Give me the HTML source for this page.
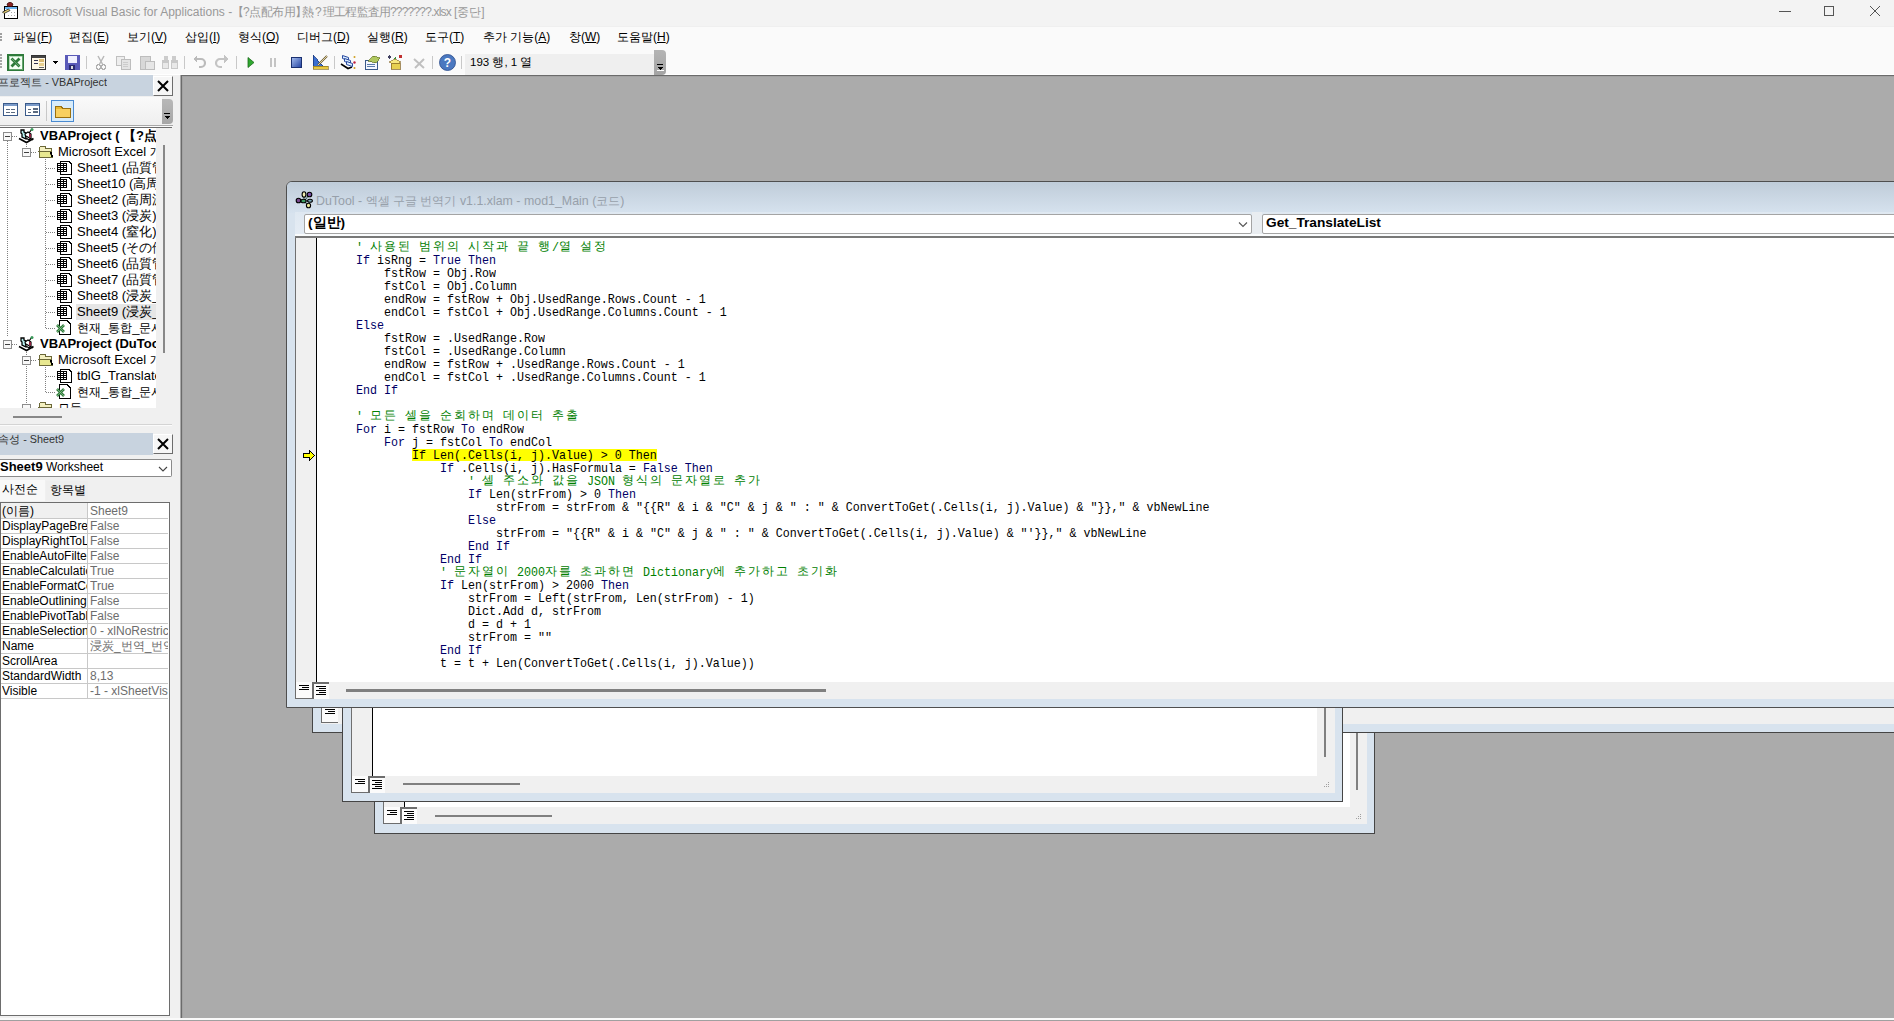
<!DOCTYPE html><html><head><meta charset="utf-8"><style>
*{margin:0;padding:0;box-sizing:border-box}
html,body{width:1894px;height:1021px;overflow:hidden;background:#ababab;position:relative;font-family:"Liberation Sans",sans-serif}
body>div{position:absolute}
div div{position:absolute}
.t{white-space:pre;line-height:1}
i.w{display:inline-block;width:14px;font-style:normal;text-align:left}
.cl{position:absolute;font-family:"Liberation Mono",monospace;font-size:11.67px;white-space:pre;line-height:13px;height:13px;color:#000;transform:scaleY(1.15);transform-origin:0 9px}
.cl i.w{transform:translateY(-1px) scaleY(0.8696);transform-origin:50% 9px}
.k{color:#000066}
.c{color:#008000}
.u{text-decoration:underline}
</style></head><body><div style="left:0px;top:0px;width:1894px;height:26px;background:#f3f3f3"></div>
<svg style="position:absolute;left:0px;top:0px" width="22" height="22" viewBox="0 0 22 22" shape-rendering="crispEdges"><rect x="4.5" y="6.5" width="13" height="12" fill="#fff" stroke="#000"/><rect x="5" y="7" width="12" height="2" fill="#6ab4f0"/><g fill="#aaa"><rect x="11" y="12" width="1" height="1"/><rect x="14" y="12" width="1" height="1"/><rect x="8" y="15" width="1" height="1"/><rect x="11" y="15" width="1" height="1"/><rect x="14" y="15" width="1" height="1"/></g><g shape-rendering="geometricPrecision"><path d="M7 4 L9 2.5 L11 2.5 L13 4 L12 6.5 L8 6.5 Z" fill="#8a2020" stroke="#3a0a0a" stroke-width="0.8"/><path d="M2.5 12 L8.5 9 L10 10.5 L4 13.5 Z" fill="#e8d070" stroke="#222" stroke-width="0.8"/></g></svg>
<div class="t" style="left:23px;top:6px;font-size:12px;color:#999">Microsoft Visual Basic for Applications -</div>
<div class="t" style="left:232px;top:6px;font-size:12px;color:#999">【</div>
<div class="t" style="left:243px;top:6px;font-size:12px;color:#999;letter-spacing:-0.8px">?</div>
<div class="t" style="left:249px;top:6px;font-size:12px;color:#999;letter-spacing:-0.5px">点配布用</div>
<div class="t" style="left:295px;top:6px;font-size:12px;color:#999">】</div>
<div class="t" style="left:302px;top:6px;font-size:12px;color:#999">熱</div>
<div class="t" style="left:315px;top:6px;font-size:12px;color:#999">?</div>
<div class="t" style="left:323px;top:6px;font-size:12px;color:#999;letter-spacing:-0.8px">理工程監査用</div>
<div class="t" style="left:390px;top:6px;font-size:12px;color:#999;letter-spacing:-0.8px">???????</div>
<div class="t" style="left:431px;top:6px;font-size:12px;color:#999;letter-spacing:-0.8px">.xlsx</div>
<div class="t" style="left:454px;top:6px;font-size:12px;color:#999">[중단]</div>
<div style="left:1779px;top:11px;width:12px;height:1px;background:#555"></div>
<div style="left:1824px;top:6px;width:10px;height:10px;border:1px solid #555"></div>
<svg style="position:absolute;left:1869px;top:5px" width="13" height="13" viewBox="0 0 13 13" shape-rendering="crispEdges"><path d="M1 1 L11 11 M11 1 L1 11" stroke="#555" stroke-width="1" fill="none" shape-rendering="geometricPrecision"/></svg>
<div style="left:0px;top:26px;width:1894px;height:49px;background:#fafafa"></div>
<div style="left:0px;top:26px;width:1894px;height:1px;background:#efefef"></div>
<div style="left:0px;top:74px;width:1894px;height:1px;background:#fff"></div>
<div style="left:0px;top:33px;width:2px;height:2px;background:#a0a0a0"></div>
<div style="left:0px;top:36px;width:2px;height:2px;background:#a0a0a0"></div>
<div style="left:0px;top:39px;width:2px;height:2px;background:#a0a0a0"></div>
<div class="t" style="left:13px;top:31px;font-size:12px;color:#000">파일(<span class="u">F</span>)</div>
<div class="t" style="left:69px;top:31px;font-size:12px;color:#000">편집(<span class="u">E</span>)</div>
<div class="t" style="left:127px;top:31px;font-size:12px;color:#000">보기(<span class="u">V</span>)</div>
<div class="t" style="left:185px;top:31px;font-size:12px;color:#000">삽입(<span class="u">I</span>)</div>
<div class="t" style="left:238px;top:31px;font-size:12px;color:#000">형식(<span class="u">O</span>)</div>
<div class="t" style="left:297px;top:31px;font-size:12px;color:#000">디버그(<span class="u">D</span>)</div>
<div class="t" style="left:367px;top:31px;font-size:12px;color:#000">실행(<span class="u">R</span>)</div>
<div class="t" style="left:425px;top:31px;font-size:12px;color:#000">도구(<span class="u">T</span>)</div>
<div class="t" style="left:483px;top:31px;font-size:12px;color:#000">추가 기능(<span class="u">A</span>)</div>
<div class="t" style="left:569px;top:31px;font-size:12px;color:#000">창(<span class="u">W</span>)</div>
<div class="t" style="left:617px;top:31px;font-size:12px;color:#000">도움말(<span class="u">H</span>)</div>
<div style="left:0px;top:54px;width:2px;height:2px;background:#a8a8a8"></div>
<div style="left:0px;top:57px;width:2px;height:2px;background:#a8a8a8"></div>
<div style="left:0px;top:60px;width:2px;height:2px;background:#a8a8a8"></div>
<div style="left:0px;top:63px;width:2px;height:2px;background:#a8a8a8"></div>
<div style="left:0px;top:66px;width:2px;height:2px;background:#a8a8a8"></div>
<div style="left:465px;top:54px;width:190px;height:21px;background:#efefef"></div>
<div style="left:654px;top:50px;width:12px;height:25px;background:linear-gradient(#b4b4b4,#a4a4a4);border-radius:0 4px 4px 0"></div>
<svg style="position:absolute;left:657px;top:64px" width="7" height="8" viewBox="0 0 7 8" shape-rendering="crispEdges"><rect x="0" y="0" width="6" height="1" fill="#000"/><path d="M0 3 L6 3 L3 6 Z" fill="#000"/><rect x="0" y="6" width="7" height="1" fill="#fff"/></svg>
<div style="left:86px;top:56px;width:1px;height:13px;background:#c8c8c8"></div>
<div style="left:184px;top:56px;width:1px;height:13px;background:#c8c8c8"></div>
<div style="left:236px;top:56px;width:1px;height:13px;background:#c8c8c8"></div>
<div style="left:334px;top:56px;width:1px;height:13px;background:#c8c8c8"></div>
<div style="left:432px;top:56px;width:1px;height:13px;background:#c8c8c8"></div>
<div style="left:461px;top:56px;width:1px;height:13px;background:#c8c8c8"></div>
<svg style="position:absolute;left:7px;top:54px" width="17" height="17" viewBox="0 0 17 17" shape-rendering="crispEdges"><rect x="1" y="1" width="15" height="15" fill="#f4fff4" stroke="#2e7a3a" stroke-width="2"/><rect x="2" y="2" width="13" height="13" fill="none" stroke="#8ac090" stroke-width="0.6"/><g shape-rendering="geometricPrecision"><path d="M4.5 4.5 L12.5 12.5 M12.5 4.5 L4.5 12.5" stroke="#2e7a3a" stroke-width="2.8"/><path d="M4.5 4.5 L12.5 12.5" stroke="#7ab884" stroke-width="0.7"/></g></svg>
<svg style="position:absolute;left:31px;top:55px" width="15" height="15" viewBox="0 0 15 15" shape-rendering="crispEdges"><rect x="0.5" y="0.5" width="14" height="14" fill="#fff8e8" stroke="#333"/><rect x="1" y="1" width="13" height="2" fill="#444"/><rect x="3" y="5" width="4" height="1" fill="#335"/><rect x="3" y="8" width="4" height="1" fill="#335"/><rect x="8" y="4" width="5" height="3" fill="#d8b870"/><rect x="8" y="8" width="5" height="3" fill="#e8d090"/><rect x="8" y="12" width="5" height="1" fill="#666"/></svg>
<svg style="position:absolute;left:52px;top:61px" width="6" height="4" viewBox="0 0 6 4" shape-rendering="crispEdges"><path d="M0 0 L6 0 L3 3 Z" fill="#000"/></svg>
<svg style="position:absolute;left:65px;top:55px" width="15" height="15" viewBox="0 0 15 15" shape-rendering="crispEdges"><rect x="0" y="0" width="15" height="15" rx="1" fill="#5a5ab8"/><rect x="3" y="1" width="9" height="7" fill="#f0f0ff"/><rect x="4" y="10" width="6" height="5" fill="#2a2a70"/><rect x="6" y="11" width="2" height="3" fill="#ddd"/></svg>
<svg style="position:absolute;left:95px;top:55px" width="12" height="15" viewBox="0 0 12 15" shape-rendering="crispEdges"><path d="M3 1 L8 10 M9 1 L4 10" stroke="#b8b8b8" stroke-width="1.5" fill="none" shape-rendering="geometricPrecision"/><circle cx="3.5" cy="12" r="2.2" fill="none" stroke="#b0b0b0" stroke-width="1.3"/><circle cx="8.5" cy="12" r="2.2" fill="none" stroke="#b0b0b0" stroke-width="1.3"/></svg>
<svg style="position:absolute;left:115px;top:55px" width="17" height="15" viewBox="0 0 17 15" shape-rendering="crispEdges"><rect x="1" y="1" width="8" height="9" fill="#eee" stroke="#c0c0c0"/><rect x="6" y="4" width="9" height="10" fill="#e4e4e4" stroke="#bdbdbd"/><path d="M8 7 H13 M8 9 H13 M8 11 H13" stroke="#ccc"/></svg>
<svg style="position:absolute;left:139px;top:55px" width="17" height="15" viewBox="0 0 17 15" shape-rendering="crispEdges"><rect x="1" y="1" width="10" height="13" fill="#d8d8d8" stroke="#bdbdbd"/><rect x="6" y="6" width="9" height="8" fill="#e6e6e6" stroke="#bdbdbd"/></svg>
<svg style="position:absolute;left:162px;top:55px" width="16" height="14" viewBox="0 0 16 14" shape-rendering="crispEdges"><rect x="2" y="1" width="4" height="5" fill="#ccc"/><rect x="10" y="1" width="4" height="5" fill="#ccc"/><rect x="0" y="5" width="7" height="9" rx="1" fill="#c8c8c8"/><rect x="9" y="5" width="7" height="9" rx="1" fill="#c8c8c8"/><rect x="1" y="8" width="5" height="5" fill="#e8e8e8"/><rect x="10" y="8" width="5" height="5" fill="#e8e8e8"/></svg>
<svg style="position:absolute;left:193px;top:55px" width="13" height="14" viewBox="0 0 13 14" shape-rendering="crispEdges"><path d="M3 4 H8 A4 4 0 0 1 8 12 H6" stroke="#bbb" stroke-width="2.2" fill="none" shape-rendering="geometricPrecision"/><path d="M0 4 L4 0 L4 8 Z" fill="#bbb"/></svg>
<svg style="position:absolute;left:215px;top:55px" width="13" height="14" viewBox="0 0 13 14" shape-rendering="crispEdges"><path d="M10 4 H5 A4 4 0 0 0 5 12 H7" stroke="#c4c4c4" stroke-width="2.2" fill="none" shape-rendering="geometricPrecision"/><path d="M13 4 L9 0 L9 8 Z" fill="#c4c4c4"/></svg>
<svg style="position:absolute;left:247px;top:57px" width="8" height="11" viewBox="0 0 8 11" shape-rendering="crispEdges"><path d="M1 0.5 L7 5.5 L1 10.5 Z" fill="#2fa82f" stroke="#1a6a1a" stroke-width="0.8" shape-rendering="geometricPrecision"/></svg>
<svg style="position:absolute;left:269px;top:57px" width="9" height="11" viewBox="0 0 9 11" shape-rendering="crispEdges"><rect x="1" y="1" width="2" height="9" fill="#c4c4c4"/><rect x="5" y="1" width="2" height="9" fill="#c4c4c4"/></svg>
<svg style="position:absolute;left:291px;top:57px" width="11" height="11" viewBox="0 0 11 11" shape-rendering="crispEdges"><defs><linearGradient id="gs" x1="0" y1="0" x2="1" y2="1"><stop offset="0" stop-color="#a8c0f0"/><stop offset="1" stop-color="#2040a0"/></linearGradient></defs><rect x="0.5" y="0.5" width="10" height="10" fill="url(#gs)" stroke="#1a3070"/></svg>
<svg style="position:absolute;left:312px;top:54px" width="17" height="16" viewBox="0 0 17 16" shape-rendering="crispEdges"><path d="M1 1 L1 12 L11 12 Z" fill="#3a6fd0" stroke="#1a3a80" stroke-width="0.8"/><rect x="1" y="12" width="15" height="3" fill="#e8c840" stroke="#7a6010" stroke-width="0.6"/><path d="M6 11 L15 2" stroke="#6a5a30" stroke-width="2" shape-rendering="geometricPrecision"/><path d="M6 11 L15 2" stroke="#e0d0a0" stroke-width="1" shape-rendering="geometricPrecision"/></svg>
<svg style="position:absolute;left:340px;top:54px" width="17" height="17" viewBox="0 0 17 17" shape-rendering="crispEdges"><g shape-rendering="geometricPrecision"><path d="M1 10 L8 14.5 L12 13" stroke="#000" stroke-width="1.6" fill="none"/><path d="M2.5 1.5 L8.5 3.5 L8.5 6.5 L2.5 4.5 Z" fill="#d8ecff" stroke="#2a4aa0"/><path d="M4.5 4.5 L10.5 6.5 L10.5 9.5 L4.5 7.5 Z" fill="#d8ecff" stroke="#2a4aa0"/><path d="M6.5 7.5 L12.5 9.5 L12.5 12.5 L6.5 10.5 Z" fill="#d8ecff" stroke="#2a4aa0"/><circle cx="14.5" cy="3" r="1" fill="#d0a020"/><circle cx="14.5" cy="8.5" r="1.2" fill="#c02040"/><circle cx="14.5" cy="14" r="1" fill="#d0a020"/></g></svg>
<svg style="position:absolute;left:364px;top:55px" width="17" height="15" viewBox="0 0 17 15" shape-rendering="crispEdges"><rect x="1" y="5" width="12" height="9" fill="#f4f8ff" stroke="#3a5a8a"/><path d="M3 9 H11 M3 11 H11" stroke="#5a7aaa"/><path d="M4 6 L9 1 L16 3 L12 8 Z" fill="#b0c860" stroke="#607020" stroke-width="0.7"/></svg>
<svg style="position:absolute;left:387px;top:54px" width="17" height="16" viewBox="0 0 17 16" shape-rendering="crispEdges"><circle cx="2.5" cy="3" r="1.8" fill="#404060"/><rect x="12" y="1" width="3" height="3" fill="#c03030"/><path d="M6 5 L9 3 L9 7 Z" fill="#3a8a3a"/><path d="M2 8 L8 5 L14 8 L8 11 Z" fill="#f8e880" stroke="#806020" stroke-width="0.6"/><rect x="4" y="9" width="9" height="6" fill="#e8d050" stroke="#806020" stroke-width="0.7"/></svg>
<svg style="position:absolute;left:412px;top:57px" width="14" height="12" viewBox="0 0 14 12" shape-rendering="crispEdges"><path d="M2 2 L12 11 M12 2 L3 11" stroke="#c0c0c0" stroke-width="2" shape-rendering="geometricPrecision"/></svg>
<svg style="position:absolute;left:439px;top:54px" width="17" height="17" viewBox="0 0 17 17" shape-rendering="crispEdges"><circle cx="8.5" cy="8.5" r="8" fill="#4a78c0" stroke="#2a4a8a" stroke-width="0.8" shape-rendering="geometricPrecision"/><text x="8.5" y="13" font-family="Liberation Sans" font-weight="bold" font-size="12" fill="#fff" text-anchor="middle">?</text></svg>
<div class="t" style="left:470px;top:57px;font-size:11.5px;color:#000">193 행, 1 열</div>
<div style="left:0px;top:75px;width:180px;height:946px;background:#f0f0f0"></div>
<div style="left:0px;top:75px;width:153px;height:21px;background:#c8d3df"></div>
<div style="left:0px;top:75px;width:107px;height:20px;overflow:hidden"><div class="t" style="right:0;top:2px;font-size:10.8px;color:#333">프로젝트 - VBAProject</div></div>
<div style="left:153px;top:76px;width:20px;height:20px;background:#f6f6f6;border-right:1px solid #6d6d6d;border-bottom:1px solid #6d6d6d;border-top:1px solid #fff;border-left:1px solid #fff"></div>
<svg style="position:absolute;left:157px;top:80px" width="12" height="12" viewBox="0 0 12 12" shape-rendering="crispEdges"><path d="M1 1 L11 11 M11 1 L1 11" stroke="#000" stroke-width="2" fill="none" shape-rendering="geometricPrecision"/></svg>
<div style="left:0px;top:97px;width:162px;height:27px;background:linear-gradient(#fafafa,#efefef)"></div>
<div style="left:162px;top:99px;width:11px;height:25px;background:linear-gradient(#b8b8b8,#a6a6a6);border-radius:0 4px 4px 0"></div>
<svg style="position:absolute;left:164px;top:113px" width="7" height="8" viewBox="0 0 7 8" shape-rendering="crispEdges"><rect x="0" y="0" width="6" height="1" fill="#000"/><path d="M0 3 L6 3 L3 6 Z" fill="#000"/></svg>
<svg style="position:absolute;left:3px;top:103px" width="15" height="13" viewBox="0 0 15 13" shape-rendering="crispEdges"><rect x="0.5" y="0.5" width="14" height="12" fill="#fff" stroke="#3a5a8a"/><rect x="1" y="1" width="13" height="2" fill="#7a9ac8"/><path d="M3 6 H7 M3 9 H7 M8 6 H12 M8 9 H12" stroke="#5a6a80"/></svg>
<svg style="position:absolute;left:25px;top:103px" width="15" height="13" viewBox="0 0 15 13" shape-rendering="crispEdges"><rect x="0.5" y="0.5" width="14" height="12" fill="#fff" stroke="#3a5a8a"/><rect x="1" y="1" width="13" height="2" fill="#7a9ac8"/><path d="M3 6 H6 M3 9 H6" stroke="#5a6a80"/><rect x="8" y="5" width="5" height="2" fill="#5a6a80"/><rect x="8" y="8" width="5" height="2" fill="#5a6a80"/></svg>
<div style="left:46px;top:101px;width:1px;height:20px;background:#c8c8c8"></div>
<div style="left:51px;top:100px;width:23px;height:22px;background:#d8ecfa;border:1px solid #4a8ad0"></div>
<svg style="position:absolute;left:55px;top:104px" width="16" height="14" viewBox="0 0 16 14" shape-rendering="crispEdges"><path d="M0.5 2.5 H6 L7.5 4 H15.5 V13.5 H0.5 Z" fill="#e8b830" stroke="#9a7010"/><rect x="1" y="5" width="14" height="8" fill="#f8d060"/></svg>
<div style="left:0px;top:125px;width:173px;height:1px;background:#a8a8a8"></div>
<div style="left:0px;top:126px;width:173px;height:299px;background:#f0f0f0;border-top:1px solid #fafafa"></div>
<div style="left:0px;top:127px;width:172px;height:1px;background:#6d6d6d"></div>
<div style="left:0px;top:128px;width:156px;height:280px;background:#fff;overflow:hidden"></div>
<div style="left:163px;top:145px;width:2px;height:208px;background:#888"></div>
<div style="left:13px;top:415px;width:49px;height:2px;background:#888"></div>
<div style="left:7px;top:141px;width:1px;height:195px;background:repeating-linear-gradient(#808080 0 1px,transparent 1px 2px)"></div>
<div style="left:26px;top:144px;width:1px;height:4px;background:repeating-linear-gradient(#808080 0 1px,transparent 1px 2px)"></div>
<div style="left:45px;top:159px;width:1px;height:169px;background:repeating-linear-gradient(#808080 0 1px,transparent 1px 2px)"></div>
<div style="left:26px;top:352px;width:1px;height:56px;background:repeating-linear-gradient(#808080 0 1px,transparent 1px 2px)"></div>
<div style="left:45px;top:367px;width:1px;height:25px;background:repeating-linear-gradient(#808080 0 1px,transparent 1px 2px)"></div>
<svg style="position:absolute;left:3px;top:132px" width="9" height="9" viewBox="0 0 9 9" shape-rendering="crispEdges"><rect x="0.5" y="0.5" width="8" height="8" fill="#f8f8f8" stroke="#8c8c8c"/><rect x="2" y="4" width="5" height="1" fill="#404040"/></svg>
<div style="left:12px;top:136px;width:6px;height:1px;background:repeating-linear-gradient(90deg,#808080 0 1px,transparent 1px 2px)"></div>
<svg style="position:absolute;left:18px;top:128px" width="17" height="16" viewBox="0 0 17 16" shape-rendering="crispEdges"><g shape-rendering="geometricPrecision"><path d="M1 10.5 L8.5 14.5 L15.5 10.5" stroke="#000" stroke-width="1.6" fill="none"/><path d="M3 2 H6 V4 L8 5 V11 L4 9 V6 L3 5 Z" fill="#b8f0f0" stroke="#000" stroke-width="1.3"/><path d="M7 6 L10 4 L13 6 L13 10 L11 12 L8 10 Z" fill="#fff" stroke="#000" stroke-width="1.2"/><path d="M8 8 L15 12" stroke="#000" stroke-width="1.2"/><path d="M11 5 L14 1" stroke="#000" stroke-width="1.2"/><circle cx="14" cy="1.5" r="1.5" fill="#3a9a5a"/><rect x="11" y="6" width="2" height="3.5" fill="#902040"/></g></svg>
<div style="left:40px;top:129px;width:116px;height:15px;overflow:hidden"><div class="t" style="left:0;top:0;font-size:13px;font-weight:bold;color:#000">VBAProject ( 【?点配布用】</div></div>
<svg style="position:absolute;left:22px;top:148px" width="9" height="9" viewBox="0 0 9 9" shape-rendering="crispEdges"><rect x="0.5" y="0.5" width="8" height="8" fill="#f8f8f8" stroke="#8c8c8c"/><rect x="2" y="4" width="5" height="1" fill="#404040"/></svg>
<div style="left:31px;top:152px;width:6px;height:1px;background:repeating-linear-gradient(90deg,#808080 0 1px,transparent 1px 2px)"></div>
<svg style="position:absolute;left:38px;top:146px" width="15" height="13" viewBox="0 0 15 13" shape-rendering="crispEdges"><path d="M1.5 11.5 V1.5 L3 0.5 H7 L8 2.5 H13.5 V11.5 Z" fill="#f4f0c0" stroke="#6b6838"/><path d="M1 5.5 H12 L14 11.5 H2 Z" fill="#e8e890" stroke="#6b6838"/><path d="M12.5 6 L14.5 11.5" stroke="#000" stroke-width="1.6"/></svg>
<div style="left:58px;top:145px;width:98px;height:15px;overflow:hidden"><div class="t" style="left:0;top:0;font-size:13px;color:#000">Microsoft Excel <span style="font-size:12px">개체</span></div></div>
<div style="left:46px;top:168px;width:10px;height:1px;background:repeating-linear-gradient(90deg,#808080 0 1px,transparent 1px 2px)"></div>
<svg style="position:absolute;left:57px;top:161px" width="16" height="15" viewBox="0 0 16 15" shape-rendering="crispEdges"><path d="M3.5 0.5 H12 L14.5 3 V13.5 H3.5 Z" fill="#fff" stroke="#000"/><rect x="0" y="2" width="10" height="9" fill="#000"/><path d="M1 3.5 H3 M4 3.5 H6 M7 3.5 H9 M1 5.5 H3 M4 5.5 H6 M7 5.5 H9 M1 7.5 H3 M4 7.5 H6 M7 7.5 H9 M1 9.5 H3 M4 9.5 H6 M7 9.5 H9" stroke="#fff"/></svg>
<div style="left:77px;top:161px;width:79px;height:15px;overflow:hidden"><div class="t" style="left:0;top:0;font-size:13px;color:#000">Sheet1 (品質管理)</div></div>
<div style="left:46px;top:184px;width:10px;height:1px;background:repeating-linear-gradient(90deg,#808080 0 1px,transparent 1px 2px)"></div>
<svg style="position:absolute;left:57px;top:177px" width="16" height="15" viewBox="0 0 16 15" shape-rendering="crispEdges"><path d="M3.5 0.5 H12 L14.5 3 V13.5 H3.5 Z" fill="#fff" stroke="#000"/><rect x="0" y="2" width="10" height="9" fill="#000"/><path d="M1 3.5 H3 M4 3.5 H6 M7 3.5 H9 M1 5.5 H3 M4 5.5 H6 M7 5.5 H9 M1 7.5 H3 M4 7.5 H6 M7 7.5 H9 M1 9.5 H3 M4 9.5 H6 M7 9.5 H9" stroke="#fff"/></svg>
<div style="left:77px;top:177px;width:79px;height:15px;overflow:hidden"><div class="t" style="left:0;top:0;font-size:13px;color:#000">Sheet10 (高周波)</div></div>
<div style="left:46px;top:200px;width:10px;height:1px;background:repeating-linear-gradient(90deg,#808080 0 1px,transparent 1px 2px)"></div>
<svg style="position:absolute;left:57px;top:193px" width="16" height="15" viewBox="0 0 16 15" shape-rendering="crispEdges"><path d="M3.5 0.5 H12 L14.5 3 V13.5 H3.5 Z" fill="#fff" stroke="#000"/><rect x="0" y="2" width="10" height="9" fill="#000"/><path d="M1 3.5 H3 M4 3.5 H6 M7 3.5 H9 M1 5.5 H3 M4 5.5 H6 M7 5.5 H9 M1 7.5 H3 M4 7.5 H6 M7 7.5 H9 M1 9.5 H3 M4 9.5 H6 M7 9.5 H9" stroke="#fff"/></svg>
<div style="left:77px;top:193px;width:79px;height:15px;overflow:hidden"><div class="t" style="left:0;top:0;font-size:13px;color:#000">Sheet2 (高周波)</div></div>
<div style="left:46px;top:216px;width:10px;height:1px;background:repeating-linear-gradient(90deg,#808080 0 1px,transparent 1px 2px)"></div>
<svg style="position:absolute;left:57px;top:209px" width="16" height="15" viewBox="0 0 16 15" shape-rendering="crispEdges"><path d="M3.5 0.5 H12 L14.5 3 V13.5 H3.5 Z" fill="#fff" stroke="#000"/><rect x="0" y="2" width="10" height="9" fill="#000"/><path d="M1 3.5 H3 M4 3.5 H6 M7 3.5 H9 M1 5.5 H3 M4 5.5 H6 M7 5.5 H9 M1 7.5 H3 M4 7.5 H6 M7 7.5 H9 M1 9.5 H3 M4 9.5 H6 M7 9.5 H9" stroke="#fff"/></svg>
<div style="left:77px;top:209px;width:79px;height:15px;overflow:hidden"><div class="t" style="left:0;top:0;font-size:13px;color:#000">Sheet3 (浸炭)</div></div>
<div style="left:46px;top:232px;width:10px;height:1px;background:repeating-linear-gradient(90deg,#808080 0 1px,transparent 1px 2px)"></div>
<svg style="position:absolute;left:57px;top:225px" width="16" height="15" viewBox="0 0 16 15" shape-rendering="crispEdges"><path d="M3.5 0.5 H12 L14.5 3 V13.5 H3.5 Z" fill="#fff" stroke="#000"/><rect x="0" y="2" width="10" height="9" fill="#000"/><path d="M1 3.5 H3 M4 3.5 H6 M7 3.5 H9 M1 5.5 H3 M4 5.5 H6 M7 5.5 H9 M1 7.5 H3 M4 7.5 H6 M7 7.5 H9 M1 9.5 H3 M4 9.5 H6 M7 9.5 H9" stroke="#fff"/></svg>
<div style="left:77px;top:225px;width:79px;height:15px;overflow:hidden"><div class="t" style="left:0;top:0;font-size:13px;color:#000">Sheet4 (窒化)</div></div>
<div style="left:46px;top:248px;width:10px;height:1px;background:repeating-linear-gradient(90deg,#808080 0 1px,transparent 1px 2px)"></div>
<svg style="position:absolute;left:57px;top:241px" width="16" height="15" viewBox="0 0 16 15" shape-rendering="crispEdges"><path d="M3.5 0.5 H12 L14.5 3 V13.5 H3.5 Z" fill="#fff" stroke="#000"/><rect x="0" y="2" width="10" height="9" fill="#000"/><path d="M1 3.5 H3 M4 3.5 H6 M7 3.5 H9 M1 5.5 H3 M4 5.5 H6 M7 5.5 H9 M1 7.5 H3 M4 7.5 H6 M7 7.5 H9 M1 9.5 H3 M4 9.5 H6 M7 9.5 H9" stroke="#fff"/></svg>
<div style="left:77px;top:241px;width:79px;height:15px;overflow:hidden"><div class="t" style="left:0;top:0;font-size:13px;color:#000">Sheet5 (その他)</div></div>
<div style="left:46px;top:264px;width:10px;height:1px;background:repeating-linear-gradient(90deg,#808080 0 1px,transparent 1px 2px)"></div>
<svg style="position:absolute;left:57px;top:257px" width="16" height="15" viewBox="0 0 16 15" shape-rendering="crispEdges"><path d="M3.5 0.5 H12 L14.5 3 V13.5 H3.5 Z" fill="#fff" stroke="#000"/><rect x="0" y="2" width="10" height="9" fill="#000"/><path d="M1 3.5 H3 M4 3.5 H6 M7 3.5 H9 M1 5.5 H3 M4 5.5 H6 M7 5.5 H9 M1 7.5 H3 M4 7.5 H6 M7 7.5 H9 M1 9.5 H3 M4 9.5 H6 M7 9.5 H9" stroke="#fff"/></svg>
<div style="left:77px;top:257px;width:79px;height:15px;overflow:hidden"><div class="t" style="left:0;top:0;font-size:13px;color:#000">Sheet6 (品質管理)</div></div>
<div style="left:46px;top:280px;width:10px;height:1px;background:repeating-linear-gradient(90deg,#808080 0 1px,transparent 1px 2px)"></div>
<svg style="position:absolute;left:57px;top:273px" width="16" height="15" viewBox="0 0 16 15" shape-rendering="crispEdges"><path d="M3.5 0.5 H12 L14.5 3 V13.5 H3.5 Z" fill="#fff" stroke="#000"/><rect x="0" y="2" width="10" height="9" fill="#000"/><path d="M1 3.5 H3 M4 3.5 H6 M7 3.5 H9 M1 5.5 H3 M4 5.5 H6 M7 5.5 H9 M1 7.5 H3 M4 7.5 H6 M7 7.5 H9 M1 9.5 H3 M4 9.5 H6 M7 9.5 H9" stroke="#fff"/></svg>
<div style="left:77px;top:273px;width:79px;height:15px;overflow:hidden"><div class="t" style="left:0;top:0;font-size:13px;color:#000">Sheet7 (品質管理)</div></div>
<div style="left:46px;top:296px;width:10px;height:1px;background:repeating-linear-gradient(90deg,#808080 0 1px,transparent 1px 2px)"></div>
<svg style="position:absolute;left:57px;top:289px" width="16" height="15" viewBox="0 0 16 15" shape-rendering="crispEdges"><path d="M3.5 0.5 H12 L14.5 3 V13.5 H3.5 Z" fill="#fff" stroke="#000"/><rect x="0" y="2" width="10" height="9" fill="#000"/><path d="M1 3.5 H3 M4 3.5 H6 M7 3.5 H9 M1 5.5 H3 M4 5.5 H6 M7 5.5 H9 M1 7.5 H3 M4 7.5 H6 M7 7.5 H9 M1 9.5 H3 M4 9.5 H6 M7 9.5 H9" stroke="#fff"/></svg>
<div style="left:77px;top:289px;width:79px;height:15px;overflow:hidden"><div class="t" style="left:0;top:0;font-size:13px;color:#000">Sheet8 (浸炭_)</div></div>
<div style="left:46px;top:312px;width:10px;height:1px;background:repeating-linear-gradient(90deg,#808080 0 1px,transparent 1px 2px)"></div>
<svg style="position:absolute;left:57px;top:305px" width="16" height="15" viewBox="0 0 16 15" shape-rendering="crispEdges"><path d="M3.5 0.5 H12 L14.5 3 V13.5 H3.5 Z" fill="#fff" stroke="#000"/><rect x="0" y="2" width="10" height="9" fill="#000"/><path d="M1 3.5 H3 M4 3.5 H6 M7 3.5 H9 M1 5.5 H3 M4 5.5 H6 M7 5.5 H9 M1 7.5 H3 M4 7.5 H6 M7 7.5 H9 M1 9.5 H3 M4 9.5 H6 M7 9.5 H9" stroke="#fff"/></svg>
<div style="left:76px;top:304px;width:80px;height:16px;background:#e6e6e6"></div>
<div style="left:77px;top:305px;width:79px;height:15px;overflow:hidden"><div class="t" style="left:0;top:0;font-size:13px;color:#000">Sheet9 (浸炭_)</div></div>
<div style="left:46px;top:328px;width:10px;height:1px;background:repeating-linear-gradient(90deg,#808080 0 1px,transparent 1px 2px)"></div>
<svg style="position:absolute;left:56px;top:320px" width="16" height="16" viewBox="0 0 16 16" shape-rendering="crispEdges"><path d="M3.5 0.5 H11 L14.5 4 V14.5 H3.5 Z" fill="#fff" stroke="#000"/><g shape-rendering="geometricPrecision"><path d="M1 5 L8 12 M8 5 L1 12" stroke="#2f7a3a" stroke-width="2.6"/><path d="M1 5 L8 12 M8 5 L1 12" stroke="#9ad0a0" stroke-width="0.6"/></g></svg>
<div style="left:77px;top:321px;width:79px;height:15px;overflow:hidden"><div class="t" style="left:0;top:0;font-size:13px;color:#000"><span style="font-size:12px">현재</span>_<span style="font-size:12px">통합</span>_<span style="font-size:12px">문서</span></div></div>
<svg style="position:absolute;left:3px;top:340px" width="9" height="9" viewBox="0 0 9 9" shape-rendering="crispEdges"><rect x="0.5" y="0.5" width="8" height="8" fill="#f8f8f8" stroke="#8c8c8c"/><rect x="2" y="4" width="5" height="1" fill="#404040"/></svg>
<div style="left:12px;top:344px;width:6px;height:1px;background:repeating-linear-gradient(90deg,#808080 0 1px,transparent 1px 2px)"></div>
<svg style="position:absolute;left:18px;top:336px" width="17" height="16" viewBox="0 0 17 16" shape-rendering="crispEdges"><g shape-rendering="geometricPrecision"><path d="M1 10.5 L8.5 14.5 L15.5 10.5" stroke="#000" stroke-width="1.6" fill="none"/><path d="M3 2 H6 V4 L8 5 V11 L4 9 V6 L3 5 Z" fill="#b8f0f0" stroke="#000" stroke-width="1.3"/><path d="M7 6 L10 4 L13 6 L13 10 L11 12 L8 10 Z" fill="#fff" stroke="#000" stroke-width="1.2"/><path d="M8 8 L15 12" stroke="#000" stroke-width="1.2"/><path d="M11 5 L14 1" stroke="#000" stroke-width="1.2"/><circle cx="14" cy="1.5" r="1.5" fill="#3a9a5a"/><rect x="11" y="6" width="2" height="3.5" fill="#902040"/></g></svg>
<div style="left:40px;top:337px;width:116px;height:15px;overflow:hidden"><div class="t" style="left:0;top:0;font-size:13px;font-weight:bold;color:#000">VBAProject (DuTool)</div></div>
<svg style="position:absolute;left:22px;top:356px" width="9" height="9" viewBox="0 0 9 9" shape-rendering="crispEdges"><rect x="0.5" y="0.5" width="8" height="8" fill="#f8f8f8" stroke="#8c8c8c"/><rect x="2" y="4" width="5" height="1" fill="#404040"/></svg>
<div style="left:31px;top:360px;width:6px;height:1px;background:repeating-linear-gradient(90deg,#808080 0 1px,transparent 1px 2px)"></div>
<svg style="position:absolute;left:38px;top:354px" width="15" height="13" viewBox="0 0 15 13" shape-rendering="crispEdges"><path d="M1.5 11.5 V1.5 L3 0.5 H7 L8 2.5 H13.5 V11.5 Z" fill="#f4f0c0" stroke="#6b6838"/><path d="M1 5.5 H12 L14 11.5 H2 Z" fill="#e8e890" stroke="#6b6838"/><path d="M12.5 6 L14.5 11.5" stroke="#000" stroke-width="1.6"/></svg>
<div style="left:58px;top:353px;width:98px;height:15px;overflow:hidden"><div class="t" style="left:0;top:0;font-size:13px;color:#000">Microsoft Excel <span style="font-size:12px">개체</span></div></div>
<div style="left:46px;top:376px;width:10px;height:1px;background:repeating-linear-gradient(90deg,#808080 0 1px,transparent 1px 2px)"></div>
<svg style="position:absolute;left:57px;top:369px" width="16" height="15" viewBox="0 0 16 15" shape-rendering="crispEdges"><path d="M3.5 0.5 H12 L14.5 3 V13.5 H3.5 Z" fill="#fff" stroke="#000"/><rect x="0" y="2" width="10" height="9" fill="#000"/><path d="M1 3.5 H3 M4 3.5 H6 M7 3.5 H9 M1 5.5 H3 M4 5.5 H6 M7 5.5 H9 M1 7.5 H3 M4 7.5 H6 M7 7.5 H9 M1 9.5 H3 M4 9.5 H6 M7 9.5 H9" stroke="#fff"/></svg>
<div style="left:77px;top:369px;width:79px;height:15px;overflow:hidden"><div class="t" style="left:0;top:0;font-size:13px;color:#000">tblG_Translate</div></div>
<div style="left:46px;top:392px;width:10px;height:1px;background:repeating-linear-gradient(90deg,#808080 0 1px,transparent 1px 2px)"></div>
<svg style="position:absolute;left:56px;top:384px" width="16" height="16" viewBox="0 0 16 16" shape-rendering="crispEdges"><path d="M3.5 0.5 H11 L14.5 4 V14.5 H3.5 Z" fill="#fff" stroke="#000"/><g shape-rendering="geometricPrecision"><path d="M1 5 L8 12 M8 5 L1 12" stroke="#2f7a3a" stroke-width="2.6"/><path d="M1 5 L8 12 M8 5 L1 12" stroke="#9ad0a0" stroke-width="0.6"/></g></svg>
<div style="left:77px;top:385px;width:79px;height:15px;overflow:hidden"><div class="t" style="left:0;top:0;font-size:13px;color:#000"><span style="font-size:12px">현재</span>_<span style="font-size:12px">통합</span>_<span style="font-size:12px">문서</span></div></div>
<svg style="position:absolute;left:22px;top:404px" width="9" height="9" viewBox="0 0 9 9" shape-rendering="crispEdges"><rect x="0.5" y="0.5" width="8" height="8" fill="#f8f8f8" stroke="#8c8c8c"/><rect x="2" y="4" width="5" height="1" fill="#404040"/></svg>
<div style="left:31px;top:408px;width:6px;height:1px;background:repeating-linear-gradient(90deg,#808080 0 1px,transparent 1px 2px)"></div>
<svg style="position:absolute;left:38px;top:402px" width="15" height="13" viewBox="0 0 15 13" shape-rendering="crispEdges"><path d="M1.5 11.5 V1.5 L3 0.5 H7 L8 2.5 H13.5 V11.5 Z" fill="#f4f0c0" stroke="#6b6838"/><path d="M1 5.5 H12 L14 11.5 H2 Z" fill="#e8e890" stroke="#6b6838"/><path d="M12.5 6 L14.5 11.5" stroke="#000" stroke-width="1.6"/></svg>
<div style="left:58px;top:401px;width:98px;height:15px;overflow:hidden"><div class="t" style="left:0;top:0;font-size:13px;color:#000"><span style="font-size:12px">모듈</span></div></div>
<div style="left:0px;top:408px;width:173px;height:17px;background:#f0f0f0"></div>
<div style="left:13px;top:416px;width:49px;height:2px;background:#888"></div>
<div style="left:0px;top:424px;width:172px;height:1px;background:#d4d4d4"></div>
<div style="left:0px;top:425px;width:172px;height:1px;background:#fbfbfb"></div>
<div style="left:0px;top:433px;width:153px;height:22px;background:#c8d3df"></div>
<div style="left:0px;top:433px;width:64px;height:20px;overflow:hidden"><div class="t" style="right:0;top:1px;font-size:10.8px;color:#333">속성 - Sheet9</div></div>
<div style="left:153px;top:434px;width:20px;height:20px;background:#f6f6f6;border-right:1px solid #6d6d6d;border-bottom:1px solid #6d6d6d;border-top:1px solid #fff;border-left:1px solid #fff"></div>
<svg style="position:absolute;left:157px;top:438px" width="12" height="12" viewBox="0 0 12 12" shape-rendering="crispEdges"><path d="M1 1 L11 11 M11 1 L1 11" stroke="#000" stroke-width="2" fill="none" shape-rendering="geometricPrecision"/></svg>
<div style="left:0px;top:459px;width:172px;height:18px;background:#fff;border:1px solid #8a8a8a;border-left:none;border-radius:0 2px 2px 0"></div>
<div class="t" style="left:0px;top:460px;font-size:12px;color:#000"><b style="font-size:13px">Sheet9</b> Worksheet</div>
<svg style="position:absolute;left:158px;top:466px" width="10" height="6" viewBox="0 0 10 6" shape-rendering="crispEdges"><path d="M1 1 L5 5 L9 1" stroke="#444" stroke-width="1.1" fill="none" shape-rendering="geometricPrecision"/></svg>
<div style="left:0px;top:480px;width:45px;height:21px;background:#f8f8f8"></div>
<div class="t" style="left:2px;top:483px;font-size:12px;color:#000">사전순</div>
<div style="left:46px;top:481px;width:42px;height:19px;background:#eeeeee"></div>
<div class="t" style="left:50px;top:484px;font-size:12px;color:#000">항목별</div>
<div style="left:0px;top:502px;width:170px;height:514px;background:#fff;border:1px solid #6d6d6d;border-left:1px solid #6d6d6d"></div>
<div style="left:1px;top:503px;width:87px;height:15px;background:#f0f0f0"></div>
<div style="left:1px;top:518px;width:167px;height:1px;background:#c8c8c8"></div>
<div style="left:2px;top:503px;width:85px;height:15px;overflow:hidden"><div class="t" style="left:0;top:2px;font-size:12px;color:#000">(이름)</div></div>
<div style="left:90px;top:503px;width:78px;height:15px;overflow:hidden"><div class="t" style="left:0;top:2px;font-size:12px;color:#6d6d6d">Sheet9</div></div>
<div style="left:1px;top:533px;width:167px;height:1px;background:#c8c8c8"></div>
<div style="left:2px;top:518px;width:85px;height:15px;overflow:hidden"><div class="t" style="left:0;top:2px;font-size:12px;color:#000">DisplayPageBreaks</div></div>
<div style="left:90px;top:518px;width:78px;height:15px;overflow:hidden"><div class="t" style="left:0;top:2px;font-size:12px;color:#6d6d6d">False</div></div>
<div style="left:1px;top:548px;width:167px;height:1px;background:#c8c8c8"></div>
<div style="left:2px;top:533px;width:85px;height:15px;overflow:hidden"><div class="t" style="left:0;top:2px;font-size:12px;color:#000">DisplayRightToLeft</div></div>
<div style="left:90px;top:533px;width:78px;height:15px;overflow:hidden"><div class="t" style="left:0;top:2px;font-size:12px;color:#6d6d6d">False</div></div>
<div style="left:1px;top:563px;width:167px;height:1px;background:#c8c8c8"></div>
<div style="left:2px;top:548px;width:85px;height:15px;overflow:hidden"><div class="t" style="left:0;top:2px;font-size:12px;color:#000">EnableAutoFilter</div></div>
<div style="left:90px;top:548px;width:78px;height:15px;overflow:hidden"><div class="t" style="left:0;top:2px;font-size:12px;color:#6d6d6d">False</div></div>
<div style="left:1px;top:578px;width:167px;height:1px;background:#c8c8c8"></div>
<div style="left:2px;top:563px;width:85px;height:15px;overflow:hidden"><div class="t" style="left:0;top:2px;font-size:12px;color:#000">EnableCalculation</div></div>
<div style="left:90px;top:563px;width:78px;height:15px;overflow:hidden"><div class="t" style="left:0;top:2px;font-size:12px;color:#6d6d6d">True</div></div>
<div style="left:1px;top:593px;width:167px;height:1px;background:#c8c8c8"></div>
<div style="left:2px;top:578px;width:85px;height:15px;overflow:hidden"><div class="t" style="left:0;top:2px;font-size:12px;color:#000">EnableFormatConditionsCalculation</div></div>
<div style="left:90px;top:578px;width:78px;height:15px;overflow:hidden"><div class="t" style="left:0;top:2px;font-size:12px;color:#6d6d6d">True</div></div>
<div style="left:1px;top:608px;width:167px;height:1px;background:#c8c8c8"></div>
<div style="left:2px;top:593px;width:85px;height:15px;overflow:hidden"><div class="t" style="left:0;top:2px;font-size:12px;color:#000">EnableOutlining</div></div>
<div style="left:90px;top:593px;width:78px;height:15px;overflow:hidden"><div class="t" style="left:0;top:2px;font-size:12px;color:#6d6d6d">False</div></div>
<div style="left:1px;top:623px;width:167px;height:1px;background:#c8c8c8"></div>
<div style="left:2px;top:608px;width:85px;height:15px;overflow:hidden"><div class="t" style="left:0;top:2px;font-size:12px;color:#000">EnablePivotTable</div></div>
<div style="left:90px;top:608px;width:78px;height:15px;overflow:hidden"><div class="t" style="left:0;top:2px;font-size:12px;color:#6d6d6d">False</div></div>
<div style="left:1px;top:638px;width:167px;height:1px;background:#c8c8c8"></div>
<div style="left:2px;top:623px;width:85px;height:15px;overflow:hidden"><div class="t" style="left:0;top:2px;font-size:12px;color:#000">EnableSelection</div></div>
<div style="left:90px;top:623px;width:78px;height:15px;overflow:hidden"><div class="t" style="left:0;top:2px;font-size:12px;color:#6d6d6d">0 - xlNoRestrictions</div></div>
<div style="left:1px;top:653px;width:167px;height:1px;background:#c8c8c8"></div>
<div style="left:2px;top:638px;width:85px;height:15px;overflow:hidden"><div class="t" style="left:0;top:2px;font-size:12px;color:#000">Name</div></div>
<div style="left:90px;top:638px;width:78px;height:15px;overflow:hidden"><div class="t" style="left:0;top:2px;font-size:12px;color:#6d6d6d">浸炭_번역_번역대상</div></div>
<div style="left:1px;top:668px;width:167px;height:1px;background:#c8c8c8"></div>
<div style="left:2px;top:653px;width:85px;height:15px;overflow:hidden"><div class="t" style="left:0;top:2px;font-size:12px;color:#000">ScrollArea</div></div>
<div style="left:90px;top:653px;width:78px;height:15px;overflow:hidden"><div class="t" style="left:0;top:2px;font-size:12px;color:#6d6d6d"></div></div>
<div style="left:1px;top:683px;width:167px;height:1px;background:#c8c8c8"></div>
<div style="left:2px;top:668px;width:85px;height:15px;overflow:hidden"><div class="t" style="left:0;top:2px;font-size:12px;color:#000">StandardWidth</div></div>
<div style="left:90px;top:668px;width:78px;height:15px;overflow:hidden"><div class="t" style="left:0;top:2px;font-size:12px;color:#6d6d6d">8,13</div></div>
<div style="left:1px;top:698px;width:167px;height:1px;background:#c8c8c8"></div>
<div style="left:2px;top:683px;width:85px;height:15px;overflow:hidden"><div class="t" style="left:0;top:2px;font-size:12px;color:#000">Visible</div></div>
<div style="left:90px;top:683px;width:78px;height:15px;overflow:hidden"><div class="t" style="left:0;top:2px;font-size:12px;color:#6d6d6d">-1 - xlSheetVisible</div></div>
<div style="left:87px;top:503px;width:1px;height:195px;background:#c8c8c8"></div>
<div style="left:181px;top:75px;width:1713px;height:943px;background:#ababab;border-left:1px solid #6b6b6b;border-top:1px solid #6b6b6b"></div>
<div style="left:182px;top:76px;width:1712px;height:1px;background:#a2a2a2"></div>
<div style="left:182px;top:76px;width:1px;height:942px;background:#a2a2a2"></div>
<div style="left:0px;top:1018px;width:1894px;height:2px;background:#fafafa"></div>
<div style="left:0px;top:1020px;width:1894px;height:1px;background:#a0a0a0"></div>
<div style="left:374px;top:700px;width:1001px;height:134px;background:#d8e3ee;border:1px solid #454545"></div>
<div style="left:383px;top:700px;width:21px;height:107px;background:#f0f0f0;border-left:1px solid #707070"></div>
<div style="left:404px;top:700px;width:1px;height:107px;background:#000"></div>
<div style="left:405px;top:700px;width:945px;height:107px;background:#fff"></div>
<div style="left:1350px;top:700px;width:17px;height:124px;background:#f0f0f0"></div>
<div style="left:1356px;top:732px;width:2px;height:58px;background:#808080"></div>
<div style="left:383px;top:807px;width:967px;height:17px;background:#f0f0f0"></div>
<svg style="position:absolute;left:383px;top:807px" width="34" height="17" viewBox="0 0 34 17" shape-rendering="crispEdges"><rect x="0" y="0" width="17" height="17" fill="#fbfbfb"/>
<rect x="0" y="0" width="1" height="17" fill="#6d6d6d"/><rect x="0" y="16" width="17" height="1" fill="#6d6d6d"/>
<rect x="4" y="3" width="10" height="1" fill="#000"/><rect x="7" y="5" width="7" height="1" fill="#000"/><rect x="4" y="7" width="10" height="1" fill="#000"/>
<rect x="17" y="0" width="17" height="17" fill="#fbfbfb"/>
<rect x="17" y="0" width="2" height="17" fill="#6d6d6d"/><rect x="17" y="0" width="17" height="2" fill="#6d6d6d"/>
<rect x="21" y="4" width="10" height="1" fill="#000"/><rect x="24" y="6" width="7" height="1" fill="#000"/><rect x="21" y="8" width="10" height="1" fill="#000"/><rect x="24" y="10" width="7" height="1" fill="#000"/><rect x="21" y="12" width="10" height="1" fill="#000"/></svg>
<div style="left:435px;top:815px;width:117px;height:2px;background:#808080"></div>
<svg style="position:absolute;left:1352px;top:812px" width="12" height="12" viewBox="0 0 12 12" shape-rendering="crispEdges"><g fill="#a0a0a0"><rect x="8" y="2" width="1" height="1"/><rect x="6" y="4" width="1" height="1"/><rect x="8" y="4" width="1" height="1"/><rect x="4" y="6" width="1" height="1"/><rect x="6" y="6" width="1" height="1"/><rect x="8" y="6" width="1" height="1"/></g></svg>
<div style="left:312px;top:690px;width:1600px;height:43px;background:#d8e3ee;border:1px solid #454545"></div>
<div style="left:321px;top:690px;width:1600px;height:34px;background:#f0f0f0"></div>
<svg style="position:absolute;left:321px;top:706px" width="18" height="17" viewBox="0 0 18 17" shape-rendering="crispEdges"><rect x="0" y="0" width="17" height="17" fill="#fbfbfb"/><rect x="0" y="0" width="1" height="17" fill="#6d6d6d"/><rect x="0" y="16" width="17" height="1" fill="#6d6d6d"/><rect x="4" y="3" width="10" height="1" fill="#000"/><rect x="7" y="5" width="7" height="1" fill="#000"/><rect x="4" y="7" width="10" height="1" fill="#000"/></svg>
<div style="left:342px;top:690px;width:1001px;height:112px;background:#d8e3ee;border:1px solid #454545"></div>
<div style="left:351px;top:690px;width:21px;height:86px;background:#f0f0f0;border-left:1px solid #707070"></div>
<div style="left:372px;top:690px;width:1px;height:86px;background:#000"></div>
<div style="left:373px;top:690px;width:944px;height:86px;background:#fff"></div>
<div style="left:1317px;top:690px;width:18px;height:103px;background:#f0f0f0"></div>
<div style="left:1324px;top:707px;width:2px;height:50px;background:#808080"></div>
<div style="left:351px;top:776px;width:966px;height:17px;background:#f0f0f0"></div>
<svg style="position:absolute;left:351px;top:776px" width="34" height="17" viewBox="0 0 34 17" shape-rendering="crispEdges"><rect x="0" y="0" width="17" height="17" fill="#fbfbfb"/>
<rect x="0" y="0" width="1" height="17" fill="#6d6d6d"/><rect x="0" y="16" width="17" height="1" fill="#6d6d6d"/>
<rect x="4" y="3" width="10" height="1" fill="#000"/><rect x="7" y="5" width="7" height="1" fill="#000"/><rect x="4" y="7" width="10" height="1" fill="#000"/>
<rect x="17" y="0" width="17" height="17" fill="#fbfbfb"/>
<rect x="17" y="0" width="2" height="17" fill="#6d6d6d"/><rect x="17" y="0" width="17" height="2" fill="#6d6d6d"/>
<rect x="21" y="4" width="10" height="1" fill="#000"/><rect x="24" y="6" width="7" height="1" fill="#000"/><rect x="21" y="8" width="10" height="1" fill="#000"/><rect x="24" y="10" width="7" height="1" fill="#000"/><rect x="21" y="12" width="10" height="1" fill="#000"/></svg>
<div style="left:403px;top:783px;width:117px;height:2px;background:#808080"></div>
<svg style="position:absolute;left:1320px;top:780px" width="12" height="12" viewBox="0 0 12 12" shape-rendering="crispEdges"><g fill="#a0a0a0"><rect x="8" y="2" width="1" height="1"/><rect x="6" y="4" width="1" height="1"/><rect x="8" y="4" width="1" height="1"/><rect x="4" y="6" width="1" height="1"/><rect x="6" y="6" width="1" height="1"/><rect x="8" y="6" width="1" height="1"/></g></svg>
<div style="left:286px;top:181px;width:1700px;height:527px;background:#d8e3ee;border:1px solid #4f4f4f;border-top-left-radius:6px;overflow:hidden"></div>
<div style="left:287px;top:182px;width:1607px;height:31px;background:linear-gradient(#bfccd9,#d6e2ee);border-top-left-radius:5px"></div>
<svg style="position:absolute;left:292px;top:188px" width="24" height="24" viewBox="0 0 24 24" shape-rendering="crispEdges"><g shape-rendering="geometricPrecision" stroke="#000" stroke-width="1.1"><path d="M7 12 L12 13 L18 13 M12 13 L16.5 17.5 M12 13 L12 7 M12 13 L17 7" stroke="#2a4a40" stroke-width="1.6" stroke-dasharray="1 0.6"/><ellipse cx="12" cy="6.5" rx="1.9" ry="2.7" fill="#f0ecb0"/><circle cx="17.5" cy="6.5" r="2.3" fill="#7a50a8"/><circle cx="6.5" cy="12.5" r="2.3" fill="#7a4a90"/><ellipse cx="11.5" cy="13" rx="2.6" ry="1.8" fill="#3a9a60"/><ellipse cx="18" cy="12.8" rx="2.4" ry="1.5" fill="#7aa8b8"/><ellipse cx="16.5" cy="17.5" rx="2.1" ry="2.3" fill="#ecec9a"/></g></svg>
<div class="t" style="left:316px;top:195px;font-size:12.4px;color:#97a0aa">DuTool - 엑셀 구글 번역기 v1.1.xlam - mod1_Main (코드)</div>
<div style="left:295px;top:212px;width:1600px;height:24px;background:linear-gradient(#dfe8f1,#e6edf5)"></div>
<div style="left:304px;top:214px;width:948px;height:20px;background:#fff;border:1px solid #a4a4a4;border-radius:2px"></div>
<div class="t" style="left:308px;top:216px;font-size:13.7px;font-weight:bold;color:#000">(일반)</div>
<svg style="position:absolute;left:1238px;top:222px" width="10" height="6" viewBox="0 0 10 6" shape-rendering="crispEdges"><path d="M1 0.5 L5 4.5 L9 0.5" stroke="#555" stroke-width="1.1" fill="none" shape-rendering="geometricPrecision"/></svg>
<div style="left:1252px;top:212px;width:10px;height:24px;background:#e9edf1"></div>
<div style="left:1262px;top:214px;width:640px;height:20px;background:#fff;border:1px solid #a4a4a4;border-radius:2px"></div>
<div class="t" style="left:1266px;top:216px;font-size:13.7px;font-weight:bold;color:#000">Get_TranslateList</div>
<div style="left:295px;top:234px;width:1600px;height:2px;background:#fafcfd"></div>
<div style="left:295px;top:236px;width:1600px;height:2px;background:#787878"></div>
<div style="left:295px;top:238px;width:21px;height:444px;background:#f0f0f0;border-left:1px solid #707070"></div>
<div style="left:316px;top:238px;width:1px;height:444px;background:#000"></div>
<div style="left:317px;top:238px;width:1600px;height:444px;background:#fff"></div>
<div style="left:295px;top:682px;width:1600px;height:17px;background:#f0f0f0"></div>
<svg style="position:absolute;left:295px;top:682px" width="34" height="17" viewBox="0 0 34 17" shape-rendering="crispEdges"><rect x="0" y="0" width="17" height="17" fill="#fbfbfb"/>
<rect x="0" y="0" width="1" height="17" fill="#6d6d6d"/><rect x="0" y="16" width="17" height="1" fill="#6d6d6d"/>
<rect x="4" y="3" width="10" height="1" fill="#000"/><rect x="7" y="5" width="7" height="1" fill="#000"/><rect x="4" y="7" width="10" height="1" fill="#000"/>
<rect x="17" y="0" width="17" height="17" fill="#fbfbfb"/>
<rect x="17" y="0" width="2" height="17" fill="#6d6d6d"/><rect x="17" y="0" width="17" height="2" fill="#6d6d6d"/>
<rect x="21" y="4" width="10" height="1" fill="#000"/><rect x="24" y="6" width="7" height="1" fill="#000"/><rect x="21" y="8" width="10" height="1" fill="#000"/><rect x="24" y="10" width="7" height="1" fill="#000"/><rect x="21" y="12" width="10" height="1" fill="#000"/></svg>
<div style="left:346px;top:689px;width:480px;height:3px;background:#808080"></div>
<svg style="position:absolute;left:303px;top:450px" width="12" height="11" viewBox="0 0 12 11" shape-rendering="crispEdges"><path d="M0.5 3.5 H6.5 V0.5 L11.5 5.5 L6.5 10.5 V7.5 H0.5 Z" fill="#ffff00" stroke="#000"/></svg>
<div class="cl" style="left:356px;top:242px"><span class="c">&#x27; <i class="w">사</i><i class="w">용</i><i class="w">된</i> <i class="w">범</i><i class="w">위</i><i class="w">의</i> <i class="w">시</i><i class="w">작</i><i class="w">과</i> <i class="w">끝</i> <i class="w">행</i>/<i class="w">열</i> <i class="w">설</i><i class="w">정</i></span></div>
<div class="cl" style="left:356px;top:255px"><span class="k">If</span> isRng = <span class="k">True</span> <span class="k">Then</span></div>
<div class="cl" style="left:384px;top:268px">fstRow = Obj.Row</div>
<div class="cl" style="left:384px;top:281px">fstCol = Obj.Column</div>
<div class="cl" style="left:384px;top:294px">endRow = fstRow + Obj.UsedRange.Rows.Count - 1</div>
<div class="cl" style="left:384px;top:307px">endCol = fstCol + Obj.UsedRange.Columns.Count - 1</div>
<div class="cl" style="left:356px;top:320px"><span class="k">Else</span></div>
<div class="cl" style="left:384px;top:333px">fstRow = .UsedRange.Row</div>
<div class="cl" style="left:384px;top:346px">fstCol = .UsedRange.Column</div>
<div class="cl" style="left:384px;top:359px">endRow = fstRow + .UsedRange.Rows.Count - 1</div>
<div class="cl" style="left:384px;top:372px">endCol = fstCol + .UsedRange.Columns.Count - 1</div>
<div class="cl" style="left:356px;top:385px"><span class="k">End If</span></div>
<div class="cl" style="left:356px;top:398px"></div>
<div class="cl" style="left:356px;top:411px"><span class="c">&#x27; <i class="w">모</i><i class="w">든</i> <i class="w">셀</i><i class="w">을</i> <i class="w">순</i><i class="w">회</i><i class="w">하</i><i class="w">며</i> <i class="w">데</i><i class="w">이</i><i class="w">터</i> <i class="w">추</i><i class="w">출</i></span></div>
<div class="cl" style="left:356px;top:424px"><span class="k">For</span> i = fstRow <span class="k">To</span> endRow</div>
<div class="cl" style="left:384px;top:437px"><span class="k">For</span> j = fstCol <span class="k">To</span> endCol</div>
<div style="left:412px;top:449px;width:245px;height:12px;background:#ffff00"></div>
<div class="cl" style="left:412px;top:450px">If Len(.Cells(i, j).Value) &gt; 0 Then</div>
<div class="cl" style="left:440px;top:463px"><span class="k">If</span> .Cells(i, j).HasFormula = <span class="k">False</span> <span class="k">Then</span></div>
<div class="cl" style="left:468px;top:476px"><span class="c">&#x27; <i class="w">셀</i> <i class="w">주</i><i class="w">소</i><i class="w">와</i> <i class="w">값</i><i class="w">을</i> JSON <i class="w">형</i><i class="w">식</i><i class="w">의</i> <i class="w">문</i><i class="w">자</i><i class="w">열</i><i class="w">로</i> <i class="w">추</i><i class="w">가</i></span></div>
<div class="cl" style="left:468px;top:489px"><span class="k">If</span> Len(strFrom) &gt; 0 <span class="k">Then</span></div>
<div class="cl" style="left:496px;top:502px">strFrom = strFrom &amp; &quot;{{R&quot; &amp; i &amp; &quot;C&quot; &amp; j &amp; &quot; : &quot; &amp; ConvertToGet(.Cells(i, j).Value) &amp; &quot;}},&quot; &amp; vbNewLine</div>
<div class="cl" style="left:468px;top:515px"><span class="k">Else</span></div>
<div class="cl" style="left:496px;top:528px">strFrom = &quot;{{R&quot; &amp; i &amp; &quot;C&quot; &amp; j &amp; &quot; : &quot; &amp; ConvertToGet(.Cells(i, j).Value) &amp; &quot;&#x27;}},&quot; &amp; vbNewLine</div>
<div class="cl" style="left:468px;top:541px"><span class="k">End If</span></div>
<div class="cl" style="left:440px;top:554px"><span class="k">End If</span></div>
<div class="cl" style="left:440px;top:567px"><span class="c">&#x27; <i class="w">문</i><i class="w">자</i><i class="w">열</i><i class="w">이</i> 2000<i class="w">자</i><i class="w">를</i> <i class="w">초</i><i class="w">과</i><i class="w">하</i><i class="w">면</i> Dictionary<i class="w">에</i> <i class="w">추</i><i class="w">가</i><i class="w">하</i><i class="w">고</i> <i class="w">초</i><i class="w">기</i><i class="w">화</i></span></div>
<div class="cl" style="left:440px;top:580px"><span class="k">If</span> Len(strFrom) &gt; 2000 <span class="k">Then</span></div>
<div class="cl" style="left:468px;top:593px">strFrom = Left(strFrom, Len(strFrom) - 1)</div>
<div class="cl" style="left:468px;top:606px">Dict.Add d, strFrom</div>
<div class="cl" style="left:468px;top:619px">d = d + 1</div>
<div class="cl" style="left:468px;top:632px">strFrom = &quot;&quot;</div>
<div class="cl" style="left:440px;top:645px"><span class="k">End If</span></div>
<div class="cl" style="left:440px;top:658px">t = t + Len(ConvertToGet(.Cells(i, j).Value))</div></body></html>
